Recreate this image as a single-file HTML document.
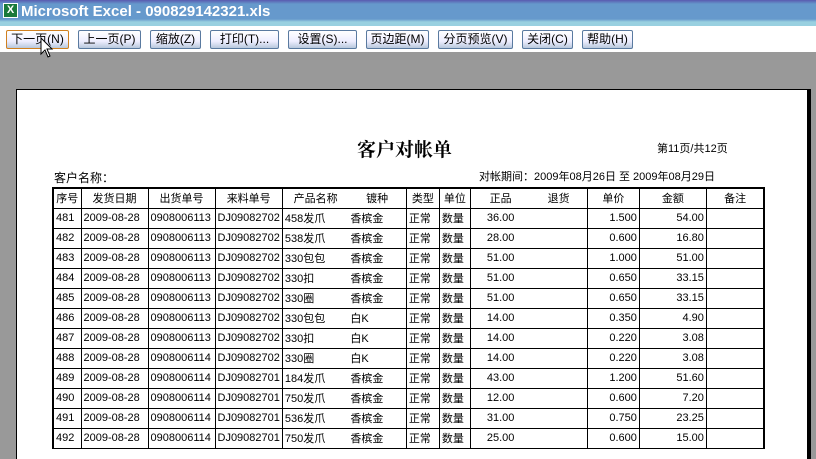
<!DOCTYPE html><html><head><meta charset="utf-8"><style>
*{margin:0;padding:0;box-sizing:border-box}
body{width:816px;height:449px;overflow:hidden;background:#999;font-family:"Liberation Sans","Noto Sans CJK SC",sans-serif;position:relative}
.tb{position:absolute;left:0;top:0;width:816px;height:26px;background:linear-gradient(#5a5ab0 0,#6699cc 4px,#6699cc 19px,#99d0e0 22px,#99d0e0 26px)}
.tt{position:absolute;left:21px;top:3px;color:#fff;font-weight:bold;font-size:15px}
.ic{position:absolute;left:3px;top:3px;width:15px;height:15px;background:#1a7a3a;border:1px solid #fff;color:#fff;font-size:11px;line-height:13px;text-align:center;font-weight:bold}
.bar{position:absolute;left:0;top:26px;width:816px;height:26px;background:#fff}
.b{position:absolute;top:30px;height:19px;border:1px solid #5a7aa0;border-radius:2px;background:linear-gradient(#fff,#eef 60%,#b8c8dc);font-size:12px;line-height:17px;text-align:center;color:#000}
.page{position:absolute;left:16px;top:89px;width:795px;height:370px;background:#fff;border-left:1px solid #000;border-top:1px solid #000;border-right:4px solid #000}
.t{position:absolute;font-size:11px;color:#000;white-space:nowrap}
table{position:absolute;left:52px;top:187px;border-collapse:collapse;font-size:11px;table-layout:fixed}
td{border:1px solid #000;height:20px;padding:0 2px;white-space:nowrap;overflow:hidden}
tr:first-child td{border-top:2px solid #000}
td:first-child{border-left:2px solid #000}
td:last-child{border-right:2px solid #000}
.r{text-align:right}.c{text-align:center}
.nl{border-right:none}.nr{border-left:none}
</style></head><body>
<div class="tb"><div class="ic">X</div><div class="tt">Microsoft Excel - 090829142321.xls</div></div>
<div class="bar"></div>
<div class="b" style="left:6px;width:63px;border-color:#d08020">下一页(N)</div>
<div class="b" style="left:78px;width:63px">上一页(P)</div>
<div class="b" style="left:150px;width:51px">缩放(Z)</div>
<div class="b" style="left:210px;width:69px">打印(T)...</div>
<div class="b" style="left:288px;width:69px">设置(S)...</div>
<div class="b" style="left:366px;width:63px">页边距(M)</div>
<div class="b" style="left:438px;width:75px">分页预览(V)</div>
<div class="b" style="left:522px;width:51px">关闭(C)</div>
<div class="b" style="left:582px;width:51px">帮助(H)</div>
<svg style="position:absolute;left:40px;top:37px" width="14" height="22"><path d="M1 1 L1 17 L5 13 L8 20 L10 19 L7 12 L12 12 Z" fill="#fff" stroke="#000"/></svg>
<div class="page"></div>
<div class="t" style="left:357px;top:135px;font-size:19px;font-weight:bold;font-family:'Noto Serif CJK SC',serif">客户对帐单</div>
<div class="t" style="left:657px;top:140px">第11页/共12页</div>
<div class="t" style="left:54px;top:169px;font-size:12px">客户名称：</div>
<div class="t" style="left:479px;top:168px;font-size:11px">对帐期间：2009年08月26日 至 2009年08月29日</div>
<table>
<colgroup><col style="width:28px"><col style="width:67px"><col style="width:67px"><col style="width:66px"><col style="width:66px"><col style="width:58px"><col style="width:33px"><col style="width:31px"><col style="width:60px"><col style="width:57px"><col style="width:52px"><col style="width:67px"><col style="width:58px"></colgroup>
<tr><td class="c">序号</td><td class="c">发货日期</td><td class="c">出货单号</td><td class="c">来料单号</td><td class="c nl">产品名称</td><td class="c nr">镀种</td><td class="c">类型</td><td class="c">单位</td><td class="c nl">正品</td><td class="c nr nl">退货</td><td class="c">单价</td><td class="c">金额</td><td class="c">备注</td></tr>
<tr><td>481</td><td>2009-08-28</td><td>0908006113</td><td>DJ09082702</td><td class="nl">458发爪</td><td class="nr">香槟金</td><td>正常</td><td>数量</td><td class="c nl">36.00</td><td class="nr nl"></td><td class="r">1.500</td><td class="r">54.00</td><td></td></tr>
<tr><td>482</td><td>2009-08-28</td><td>0908006113</td><td>DJ09082702</td><td class="nl">538发爪</td><td class="nr">香槟金</td><td>正常</td><td>数量</td><td class="c nl">28.00</td><td class="nr nl"></td><td class="r">0.600</td><td class="r">16.80</td><td></td></tr>
<tr><td>483</td><td>2009-08-28</td><td>0908006113</td><td>DJ09082702</td><td class="nl">330包包</td><td class="nr">香槟金</td><td>正常</td><td>数量</td><td class="c nl">51.00</td><td class="nr nl"></td><td class="r">1.000</td><td class="r">51.00</td><td></td></tr>
<tr><td>484</td><td>2009-08-28</td><td>0908006113</td><td>DJ09082702</td><td class="nl">330扣</td><td class="nr">香槟金</td><td>正常</td><td>数量</td><td class="c nl">51.00</td><td class="nr nl"></td><td class="r">0.650</td><td class="r">33.15</td><td></td></tr>
<tr><td>485</td><td>2009-08-28</td><td>0908006113</td><td>DJ09082702</td><td class="nl">330圈</td><td class="nr">香槟金</td><td>正常</td><td>数量</td><td class="c nl">51.00</td><td class="nr nl"></td><td class="r">0.650</td><td class="r">33.15</td><td></td></tr>
<tr><td>486</td><td>2009-08-28</td><td>0908006113</td><td>DJ09082702</td><td class="nl">330包包</td><td class="nr">白K</td><td>正常</td><td>数量</td><td class="c nl">14.00</td><td class="nr nl"></td><td class="r">0.350</td><td class="r">4.90</td><td></td></tr>
<tr><td>487</td><td>2009-08-28</td><td>0908006113</td><td>DJ09082702</td><td class="nl">330扣</td><td class="nr">白K</td><td>正常</td><td>数量</td><td class="c nl">14.00</td><td class="nr nl"></td><td class="r">0.220</td><td class="r">3.08</td><td></td></tr>
<tr><td>488</td><td>2009-08-28</td><td>0908006114</td><td>DJ09082702</td><td class="nl">330圈</td><td class="nr">白K</td><td>正常</td><td>数量</td><td class="c nl">14.00</td><td class="nr nl"></td><td class="r">0.220</td><td class="r">3.08</td><td></td></tr>
<tr><td>489</td><td>2009-08-28</td><td>0908006114</td><td>DJ09082701</td><td class="nl">184发爪</td><td class="nr">香槟金</td><td>正常</td><td>数量</td><td class="c nl">43.00</td><td class="nr nl"></td><td class="r">1.200</td><td class="r">51.60</td><td></td></tr>
<tr><td>490</td><td>2009-08-28</td><td>0908006114</td><td>DJ09082701</td><td class="nl">750发爪</td><td class="nr">香槟金</td><td>正常</td><td>数量</td><td class="c nl">12.00</td><td class="nr nl"></td><td class="r">0.600</td><td class="r">7.20</td><td></td></tr>
<tr><td>491</td><td>2009-08-28</td><td>0908006114</td><td>DJ09082701</td><td class="nl">536发爪</td><td class="nr">香槟金</td><td>正常</td><td>数量</td><td class="c nl">31.00</td><td class="nr nl"></td><td class="r">0.750</td><td class="r">23.25</td><td></td></tr>
<tr><td>492</td><td>2009-08-28</td><td>0908006114</td><td>DJ09082701</td><td class="nl">750发爪</td><td class="nr">香槟金</td><td>正常</td><td>数量</td><td class="c nl">25.00</td><td class="nr nl"></td><td class="r">0.600</td><td class="r">15.00</td><td></td></tr>
</table>
</body></html>
